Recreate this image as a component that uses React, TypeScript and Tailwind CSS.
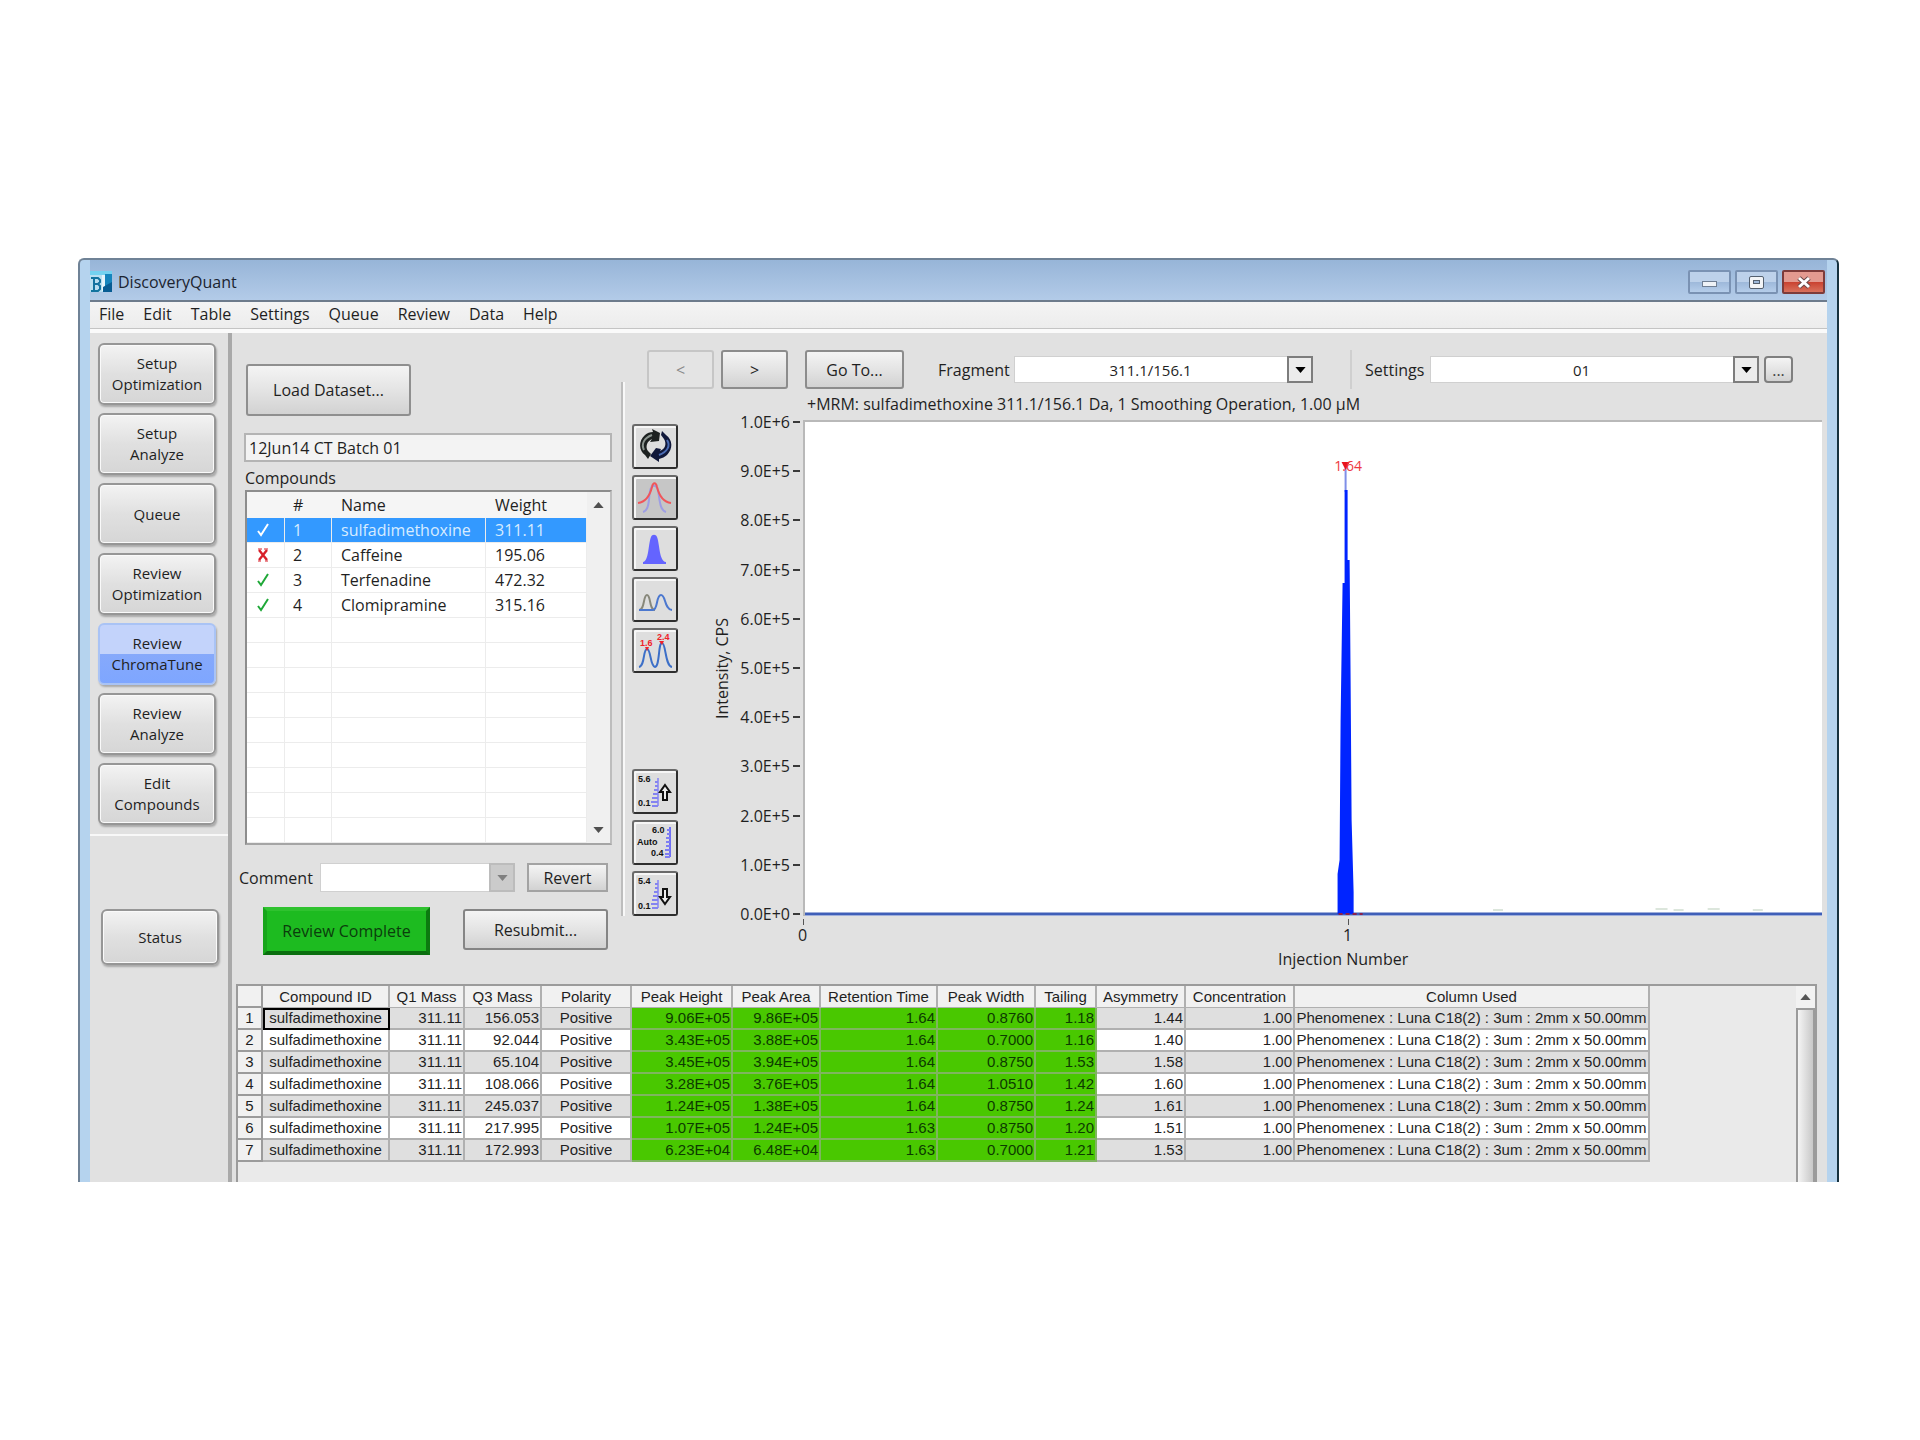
import type { ReactNode } from "react";

const MENUS = ["File", "Edit", "Table", "Settings", "Queue", "Review", "Data", "Help"];

const STEPS = [
  "Setup Optimization",
  "Setup Analyze",
  "Queue",
  "Review Optimization",
  "Review ChromaTune",
  "Review Analyze",
  "Edit Compounds",
];
const ACTIVE_STEP = "Review ChromaTune";

type Compound = { id: number; name: string; weight: string; ok: boolean };

const COMPOUNDS: Compound[] = [
  { id: 1, name: "sulfadimethoxine", weight: "311.11", ok: true },
  { id: 2, name: "Caffeine", weight: "195.06", ok: false },
  { id: 3, name: "Terfenadine", weight: "472.32", ok: true },
  { id: 4, name: "Clomipramine", weight: "315.16", ok: true },
];
const EMPTY_ROWS = [5, 6, 7, 8, 9, 10, 11, 12, 13];

const Y_TICKS = [
  "1.0E+6", "9.0E+5", "8.0E+5", "7.0E+5", "6.0E+5", "5.0E+5",
  "4.0E+5", "3.0E+5", "2.0E+5", "1.0E+5", "0.0E+0",
];

const COLUMNS = [
  { label: "Compound ID", width: "w-[127px]", align: "text-center", green: false },
  { label: "Q1 Mass", width: "w-[75px]", align: "text-right", green: false },
  { label: "Q3 Mass", width: "w-[77px]", align: "text-right", green: false },
  { label: "Polarity", width: "w-[90px]", align: "text-center", green: false },
  { label: "Peak Height", width: "w-[101px]", align: "text-right", green: true },
  { label: "Peak Area", width: "w-[88px]", align: "text-right", green: true },
  { label: "Retention Time", width: "w-[117px]", align: "text-right", green: true },
  { label: "Peak Width", width: "w-[98px]", align: "text-right", green: true },
  { label: "Tailing", width: "w-[61px]", align: "text-right", green: true },
  { label: "Asymmetry", width: "w-[89px]", align: "text-right", green: false },
  { label: "Concentration", width: "w-[109px]", align: "text-right", green: false },
  { label: "Column Used", width: "w-[355px]", align: "text-center", green: false },
];

const LUNA = "Phenomenex : Luna C18(2) : 3um : 2mm x 50.00mm";

const RESULTS = [
  ["156.053", "9.06E+05", "9.86E+05", "1.64", "0.8760", "1.18", "1.44"],
  ["92.044", "3.43E+05", "3.88E+05", "1.64", "0.7000", "1.16", "1.40"],
  ["65.104", "3.45E+05", "3.94E+05", "1.64", "0.8750", "1.53", "1.58"],
  ["108.066", "3.28E+05", "3.76E+05", "1.64", "1.0510", "1.42", "1.60"],
  ["245.037", "1.24E+05", "1.38E+05", "1.64", "0.8750", "1.24", "1.61"],
  ["217.995", "1.07E+05", "1.24E+05", "1.63", "0.8750", "1.20", "1.51"],
  ["172.993", "6.23E+04", "6.48E+04", "1.63", "0.7000", "1.21", "1.53"],
].map(([q3, ...rest]) => ["sulfadimethoxine", "311.11", q3, "Positive", ...rest, "1.00", LUNA]);

const grayFace = "bg-linear-to-b from-[#f4f4f4] via-[#e4e4e4] to-[#d2d2d2]";

function SideButton({ label, active, short }: { label: string; active?: boolean; short?: boolean }) {
  return (
    <button
      type="button"
      className={`flex w-[118px] items-center justify-center rounded-md border-2 px-3 text-center text-[15px] leading-[21px] shadow-[1px_2px_2px_rgba(0,0,0,0.25)] ${
        short ? "h-[56px]" : "h-[62px]"
      } ${
        active
          ? "border-[#a9c3f5] bg-linear-to-b from-[#c3d3fb] from-50% via-[#86a9fb] via-50% to-[#7ea6ff]"
          : "border-[#969696] bg-linear-to-b from-[#f3f3f3] from-0% via-[#e0e0e0] via-50% to-[#d6d6d6] inset-shadow-[0_0_0_1px_#fafafa]"
      }`}
    >
      <span className="w-min">{label}</span>
    </button>
  );
}

function Arrow({ up, className = "" }: { up?: boolean; className?: string }) {
  return (
    <svg viewBox="0 0 12 7" className={`h-[6px] w-[11px] ${className}`} aria-hidden>
      <path d={up ? "M0 7 6 0l6 7z" : "M0 0h12L6 7z"} fill="currentColor" />
    </svg>
  );
}

function Combo({ id, value, dim, className }: { id: string; value: string; dim?: boolean; className: string }) {
  return (
    <div className={`relative ${className}`}>
      <select
        id={id}
        defaultValue={value}
        className="block h-full w-full appearance-none border border-[#d0d0d0] bg-white pr-[26px] text-center text-[15px] outline-none [text-align-last:center]"
      >
        <option value={value}>{value}</option>
      </select>
      <span
        className={`pointer-events-none absolute inset-y-0 right-0 flex w-[26px] items-center justify-center border-2 ${
          dim ? "border-[#bcbcbc] bg-[#cbcbcb] text-[#808080]" : "border-[#7d7d7d] bg-[#ececec] text-black"
        }`}
      >
        <Arrow />
      </span>
    </div>
  );
}

function ToolButton({ label, pressed, children }: { label: string; pressed?: boolean; children: ReactNode }) {
  return (
    <button
      type="button"
      aria-label={label}
      className={`block h-[45px] w-[46px] rounded-[3px] border-2 border-t-[#6a6a6a] border-r-[#2e2e2e] border-b-[#2e2e2e] border-l-[#6a6a6a] ${
        pressed ? "bg-[#c6c6c6]" : "bg-[#dedede]"
      } inset-shadow-[2px_2px_0_#f6f6f6]`}
    >
      <svg viewBox="0 0 42 41" className="h-full w-full" fill="none" aria-hidden>
        {children}
      </svg>
    </button>
  );
}

function IconText({ x, y, fill = "#111", children }: { x: number; y: number; fill?: string; children: string }) {
  return (
    <text x={x} y={y} fill={fill} fontSize="9" fontWeight="700" fontFamily="Liberation Sans, sans-serif">
      {children}
    </text>
  );
}

function TitleBar() {
  return (
    <header className="flex h-[42px] items-center border-b-2 border-[#6d7b8c] bg-linear-to-b from-[#97b5d8] to-[#b3cbe8] pt-[4px] pr-[2px]">
      <svg viewBox="0 0 23 22" className="h-[22px] w-[23px]" aria-hidden>
        <path d="M0 4h13v17H0z" fill="#b9dff0" />
        <path d="M0 0h22v4H0z" fill="#74d2f0" />
        <path d="M12 4h3v16h-3z" fill="#e4f4fb" />
        <path d="M15 3h7v13h-7z" fill="#1585bd" />
        <path d="M13 16l9-5v10h-9z" fill="#075c93" />
        <path d="M1 7h7l2 2v2l-2 2 2 2v3l-2 2H1M4 7v13M4 13h4" fill="none" stroke="#12739f" strokeWidth="2" />
      </svg>
      <h1 className="ml-[5px] flex-1 text-base leading-[22px] text-[#1c2430]">DiscoveryQuant</h1>
      <div className="flex gap-[4px]">
        <button type="button" aria-label="Minimize" className="flex h-[24px] w-[43px] items-center justify-center rounded-[2px] border-2 border-[#7a92b3] bg-linear-to-b from-[#bdd1ea] from-50% via-[#9db8da] via-50% to-[#b5cdea]">
          <span className="mt-1 h-[6px] w-[15px] border border-[#6f7e93] bg-[#eef2f7]" />
        </button>
        <button type="button" aria-label="Restore" className="flex h-[24px] w-[43px] items-center justify-center rounded-[2px] border-2 border-[#7a92b3] bg-linear-to-b from-[#bdd1ea] from-50% via-[#9db8da] via-50% to-[#b5cdea]">
          <span className="flex h-[13px] w-[15px] items-center justify-center rounded-[2px] border border-[#54606f] bg-[#f2f4f7]">
            <span className="h-[4px] w-[7px] border border-[#54606f] bg-[#9db8da]" />
          </span>
        </button>
        <button type="button" aria-label="Close" className="flex h-[24px] w-[43px] items-center justify-center rounded-[2px] border-2 border-[#7d3b3a] bg-linear-to-b from-[#e39a90] from-50% via-[#c9402f] via-50% to-[#d9705c]">
          <svg viewBox="0 0 16 13" className="h-[13px] w-[16px]" aria-hidden>
            <path d="M3 2l10 9M13 2L3 11" stroke="#6b4a4a" strokeWidth="5" />
            <path d="M3 2l10 9M13 2L3 11" stroke="#fff" strokeWidth="3" />
          </svg>
        </button>
      </div>
    </header>
  );
}

function MenuBar() {
  return (
    <nav className="flex h-[31px] items-center gap-[19px] border-b-4 border-[#fafafa] bg-linear-to-b from-[#f4f4f4] to-[#ececec] pb-[3px] pl-[9px] text-base leading-[22px] inset-shadow-[0_-1px_0_#c4c4c4]">
      {MENUS.map((menu) => (
        <button key={menu} type="button">
          {menu}
        </button>
      ))}
    </nav>
  );
}

function Sidebar() {
  return (
    <aside className="w-[142px] shrink-0 border-r-4 border-[#a9a9a9]">
      <div className="flex flex-col gap-2 border-b-2 border-[#f8f8f8] pt-[10px] pb-[9px] pl-[8px]">
        {STEPS.map((step) => (
          <SideButton key={step} label={step} active={step === ACTIVE_STEP} />
        ))}
      </div>
      <div className="pt-[73px] pl-[11px]">
        <SideButton label="Status" short />
      </div>
    </aside>
  );
}

function Mark({ ok, selected }: { ok: boolean; selected: boolean }) {
  if (!ok) {
    return (
      <svg viewBox="0 0 12 14" className="ml-[10px] h-[14px] w-[12px]" aria-label="Rejected">
        <path d="M2 2l8 10M10 2L2 12" stroke="#d8202a" strokeWidth="2.4" />
        <path d="M1 1h4M7 1h4M1 13h3M8 13h3" stroke="#d8202a" strokeWidth="1" />
      </svg>
    );
  }
  return (
    <svg viewBox="0 0 12 14" className="ml-[10px] h-[14px] w-[12px]" aria-label="Accepted">
      <path d="M1 8l3 4L11 1" fill="none" stroke={selected ? "#fff" : "#1fa838"} strokeWidth="2" />
    </svg>
  );
}

function CompoundList() {
  const cell = "border-b border-r border-[#ececec] p-0";
  return (
    <div className="flex border-2 border-[#8d8d8d] border-r-[#bdbdbd] border-b-[#a5a5a5] bg-white">
      <table className="flex-1 table-fixed border-separate border-spacing-0 text-left text-base leading-[22px]">
        <thead>
          <tr className="h-[26px] bg-[#f5f5f5]">
            <th className="w-[38px] p-0" aria-label="Review state" />
            <th className="w-[47px] p-0 pl-2 font-normal">#</th>
            <th className="w-[154px] p-0 pl-[9px] font-normal">Name</th>
            <th className="p-0 pl-[9px] font-normal">Weight</th>
          </tr>
        </thead>
        <tbody>
          {COMPOUNDS.map((row) => (
            <tr key={row.id} className={`h-[25px] ${row.id === 1 ? "bg-[#3399ff] text-[#d7ecff]" : ""}`}>
              <td className={cell}>
                <Mark ok={row.ok} selected={row.id === 1} />
              </td>
              <td className={`${cell} pl-2`}>{row.id}</td>
              <td className={`${cell} pl-[9px]`}>{row.name}</td>
              <td className={`${cell} pl-[9px]`}>{row.weight}</td>
            </tr>
          ))}
          {EMPTY_ROWS.map((n) => (
            <tr key={n} className="h-[25px]">
              <td className={cell} />
              <td className={cell} />
              <td className={cell} />
              <td className={cell} />
            </tr>
          ))}
        </tbody>
      </table>
      <div className="flex w-[23px] shrink-0 flex-col items-center justify-between bg-[#f0f0f0] py-[10px] text-[#505050]">
        <Arrow up />
        <Arrow />
      </div>
    </div>
  );
}

function DatasetPanel() {
  return (
    <section className="flex w-[391px] shrink-0 flex-col pt-[31px] pl-[11px] text-base leading-[22px]">
      <button type="button" className={`ml-[3px] h-[52px] w-[165px] rounded-[3px] border-2 border-[#8f8f8f] ${grayFace}`}>
        Load Dataset...
      </button>
      <input
        aria-label="Dataset"
        readOnly
        value="12Jun14 CT Batch 01"
        className="mt-[17px] ml-[1px] h-[29px] w-[368px] border-2 border-[#b4b4b4] bg-[#f3f3f3] px-[3px]"
      />
      <h2 className="ml-[2px] pt-[5px]">Compounds</h2>
      <div className="mt-[1px] ml-[2px] w-[367px]">
        <CompoundList />
      </div>
      <div className="mt-[18px] flex h-[29px] items-center">
        <label htmlFor="comment" className="-ml-1 w-[81px]">
          Comment
        </label>
        <Combo id="comment" value="" dim className="h-[29px] w-[195px]" />
        <button type="button" className={`ml-3 h-[29px] w-[81px] border-2 border-[#a3a3a3] ${grayFace}`}>
          Revert
        </button>
      </div>
      <div className="mt-[15px] flex items-start pl-[20px]">
        <button
          type="button"
          className="h-[48px] w-[167px] border-4 border-t-[#2fc22f] border-r-[#0c7a10] border-b-[#0a6e0e] border-l-[#17a51b] bg-[#1dbb20] text-[#0b3d0c]"
        >
          Review Complete
        </button>
        <button type="button" className={`mt-[2px] ml-[33px] h-[41px] w-[145px] rounded-[3px] border-2 border-[#858585] ${grayFace}`}>
          Resubmit...
        </button>
      </div>
    </section>
  );
}

function PlotTools() {
  return (
    <div className="flex w-[56px] shrink-0 flex-col gap-[6px] border-l-2 border-[#f8f8f8] pt-[42px] pl-[7px] shadow-[-2px_0_0_#bdbdbd]">
      <ToolButton label="Refresh">
        <path d="M14 33 11 29C5 25 4 15 11 9c2-2 5-3 8-3l-1-3 8 4-1 8-9 1 2-3c-5 2-7 8-4 12l3 3z" fill="#1d2120" />
        <path d="M10 24c-3-6 0-12 8-15" stroke="#8b948f" strokeWidth="2" />
        <path d="M28 5l4 4c7 5 7 14 1 20-2 2-5 3-8 4v3l-9-6 6-8 5 1-1 2c5-2 7-7 4-12l-3-4z" fill="#10183a" />
        <path d="M33 14c4 6 0 12-8 15" stroke="#4a6cb4" strokeWidth="2" />
      </ToolButton>
      <ToolButton label="Smooth" pressed>
        <path d="M9 35c8-2 5-20 8-24 1-3 5-3 6 0 3 4 1 22 9 24" stroke="#9d9de4" strokeWidth="2" />
        <path d="M4 26c8-1 12-8 14-16 1-5 4-5 5 0 2 8 6 15 14 16" stroke="#f0565a" strokeWidth="2" />
      </ToolButton>
      <ToolButton label="Show peak area">
        <path d="M9 36v-2c6-1 5-17 8-25 1-3 5-3 6 0 3 8 2 24 9 25v2z" fill="#6464ff" />
      </ToolButton>
      <ToolButton label="Overlay traces">
        <path d="M5 31c6 0 4-15 8-15s2 15 8 15" stroke="#87877a" strokeWidth="2" />
        <path d="M5 31h14c5 0 3-15 8-15s3 14 11 15" stroke="#4c78cf" strokeWidth="2" />
      </ToolButton>
      <ToolButton label="Label peaks">
        <path d="M5 37c6-1 4-18 8-18s3 17 8 18c5-1 3-24 7-24s3 23 10 24" stroke="#3c6fc8" strokeWidth="2" />
        <path d="M11 17h4l-2 4zM25 11h5l-2 4z" fill="#f0222a" />
        <IconText x={6} y={16} fill="#f0222a">1.6</IconText>
        <IconText x={23} y={10} fill="#f0222a">2.4</IconText>
      </ToolButton>
      <div className="mt-[90px] flex flex-col gap-[6px]">
        <ToolButton label="Scale up">
          <IconText x={4} y={11}>5.6</IconText>
          <IconText x={4} y={35}>0.1</IconText>
          <path d="M24 7v28" stroke="#9a9af0" strokeWidth="2" />
          <path d="M21 11h3M21 15h3M20 19h4M19 23h5M18 27h6M17 31h7M18 35h6" stroke="#8484f0" strokeWidth="2" />
          <path d="M31 14l5 7h-3v8h-4v-8h-3z" stroke="#111" strokeWidth="2" fill="#eee" />
        </ToolButton>
        <ToolButton label="Set scale">
          <IconText x={18} y={11}>6.0</IconText>
          <IconText x={3} y={23}>Auto</IconText>
          <IconText x={17} y={34}>0.4</IconText>
          <path d="M36 5v30" stroke="#6f6ff4" strokeWidth="2" />
          <path d="M33 8h3M33 12h3M32 16h4M32 20h4M32 24h4M31 28h5M31 32h5M31 35h5" stroke="#7f7ff4" strokeWidth="2" />
        </ToolButton>
        <ToolButton label="Scale down">
          <IconText x={4} y={11}>5.4</IconText>
          <IconText x={4} y={36}>0.1</IconText>
          <path d="M24 7v28" stroke="#9a9af0" strokeWidth="2" />
          <path d="M21 11h3M21 15h3M20 19h4M19 23h5M18 27h6M17 31h7M18 35h6" stroke="#8484f0" strokeWidth="2" />
          <path d="M31 31l5-7h-3v-8h-4v8h-3z" stroke="#111" strokeWidth="2" fill="#eee" />
        </ToolButton>
      </div>
    </div>
  );
}

function PlotToolbar() {
  return (
    <div className="flex h-[39px] items-center pr-[34px] pl-[26px] text-base leading-[22px]">
      <button type="button" disabled className="h-[39px] w-[67px] rounded-[3px] border-2 border-[#c6c6c6] bg-[#e4e4e4] text-[#8a8a8a]">
        &lt;
      </button>
      <button type="button" className={`ml-[7px] h-[39px] w-[67px] rounded-[3px] border-2 border-[#8c8c8c] ${grayFace}`}>
        &gt;
      </button>
      <button type="button" className={`ml-[17px] h-[39px] w-[99px] rounded-[3px] border-2 border-[#8c8c8c] ${grayFace}`}>
        Go To...
      </button>
      <label htmlFor="fragment" className="ml-[34px] w-[76px]">
        Fragment
      </label>
      <Combo id="fragment" value="311.1/156.1" className="h-[27px] w-[299px]" />
      <span className="ml-[37px] h-full w-[2px] bg-[#cfcfcf]" />
      <label htmlFor="settings" className="ml-[13px] w-[65px]">
        Settings
      </label>
      <Combo id="settings" value="01" className="h-[27px] flex-1" />
      <button type="button" aria-label="Edit settings" className={`ml-[5px] h-[27px] w-[29px] rounded-[4px] border-2 border-[#7f7f7f] leading-[20px] text-[#444] ${grayFace}`}>
        ...
      </button>
    </div>
  );
}

function Chromatogram() {
  return (
    <div className="flex pr-[5px] text-base leading-[22px]">
      <div className="mt-[206px] h-[104px] w-[22px] rotate-180 self-start text-center whitespace-nowrap [writing-mode:vertical-rl]">
        Intensity, CPS
      </div>
      <div className="flex h-[514px] w-[70px] flex-col justify-between text-right">
        {Y_TICKS.map((tick) => (
          <div key={tick} className="flex items-center justify-end gap-[3px] pr-[3px]">
            <span>{tick}</span>
            <span className="h-[2px] w-[7px] bg-[#3a3a3a]" />
          </div>
        ))}
      </div>
      <div className="flex-1 pt-[9px]">
        <div className="relative h-[496px] border-t-2 border-l-2 border-[#b9b9b9] bg-white">
          <svg viewBox="0 0 1014 494" preserveAspectRatio="none" className="block h-full w-full" aria-label="Chromatogram">
            <path d="M686 488h10M848 487h12M866 488h10M900 487h12M945 488h10" stroke="#b9cdb9" strokeWidth="1" />
            <path d="M0 492h1014" stroke="#3f5fb8" strokeWidth="3" />
            <path d="M539 46v24" stroke="#7f8fe8" strokeWidth="2" />
            <path d="M531 492v-40l2-14 1-138 2-139h2V68h3v70h2l1 120 1 140 2 72v22z" fill="#0024ff" />
            <path d="M532 492h24" stroke="#8c1f4a" strokeWidth="2" strokeDasharray="4 3" />
            <path d="M535 40h8l-4 8z" fill="#e8141c" />
          </svg>
          <span className="absolute top-[34px] left-[53.4%] -translate-x-1/2 text-sm leading-[20px] text-[#ee3a40]">1.64</span>
        </div>
        <div className="relative h-[60px]">
          <span className="absolute top-[3px] left-0 h-[6px] w-[1px] bg-[#555]" />
          <span className="absolute top-[3px] left-[53.5%] h-[6px] w-[1px] bg-[#555]" />
          <span className="absolute top-[8px] -left-[5px]">0</span>
          <span className="absolute top-[8px] left-[53%]">1</span>
          <span className="absolute top-[32px] left-[53%] -translate-x-1/2">Injection Number</span>
        </div>
      </div>
    </div>
  );
}

function ResultsTable() {
  return (
    <div className="mr-[10px] ml-[4px] flex h-[198px] border-t-2 border-l-2 border-[#9b9b9b] bg-[#eaeaea]">
      <div className="min-w-0 flex-1 overflow-hidden">
        <table className="table-fixed border-separate border-spacing-0 font-['Liberation_Sans',sans-serif] text-[15px] leading-[20px]">
          <thead>
            <tr className="h-[22px] bg-[#f1f1f1]">
              <th className="w-[25px] border-r-2 border-b-2 border-[#9b9b9b] p-0" aria-label="Row" />
              {COLUMNS.map((col) => (
                <th key={col.label} className={`${col.width} border-r-2 border-b border-[#b0b0b0] p-0 text-center font-normal whitespace-nowrap`}>
                  {col.label}
                </th>
              ))}
            </tr>
          </thead>
          <tbody>
            {RESULTS.map((row, i) => (
              <tr key={row[2]} className={`h-[22px] ${i % 2 === 0 ? "bg-[#dfdfdf]" : "bg-white"}`}>
                <th className="border-r-2 border-b-2 border-[#9b9b9b] bg-[#f1f1f1] p-0 text-center font-normal">{i + 1}</th>
                {row.map((value, j) => (
                  <td
                    key={COLUMNS[j].label}
                    className={`border-r-2 border-b-2 px-[1px] py-0 whitespace-nowrap ${COLUMNS[j].align} ${
                      COLUMNS[j].green ? "border-[#7fb55f] bg-[#49c800] text-[#0c3a00]" : "border-[#b0b0b0]"
                    } ${i === 0 && j === 0 ? "outline-2 -outline-offset-2 outline-black" : ""}`}
                  >
                    {value}
                  </td>
                ))}
              </tr>
            ))}
          </tbody>
        </table>
      </div>
      <div className="flex w-[21px] shrink-0 flex-col items-center border-r-2 border-[#9b9b9b] bg-[#f2f2f2] pt-[8px] text-[#555]">
        <Arrow up />
        <div className="mt-[8px] w-full flex-1 border-2 border-b-0 border-[#9b9b9b] bg-linear-to-r from-[#f5f5f5] to-[#c8c8c8]" />
      </div>
    </div>
  );
}

export default function App() {
  return (
    <div className="min-h-screen bg-white pt-[258px] pr-[81px] pl-[78px] font-['Open_Sans','Noto_Sans',sans-serif] text-[#1f1f1f]">
      <main className="overflow-hidden rounded-t-[6px] border-t-2 border-r-2 border-l-2 border-[#6f8296] border-r-[#16323f] bg-[#b5d3ee] px-[10px]">
        <TitleBar />
        <MenuBar />
        <div className="flex bg-[#e1e1e1]">
          <Sidebar />
          <div className="min-w-0 flex-1">
            <div className="flex h-[651px]">
              <DatasetPanel />
              <div className="mt-[49px] h-[545px]">
                <PlotTools />
              </div>
              <div className="-ml-[58px] flex min-w-0 flex-1 flex-col pt-[17px]">
                <PlotToolbar />
                <p className="mt-[4px] ml-[186px] text-base leading-[22px]">
                  +MRM: sulfadimethoxine 311.1/156.1 Da, 1 Smoothing Operation, 1.00 µM
                </p>
                <div className="-mt-[4px] ml-[90px]">
                  <Chromatogram />
                </div>
              </div>
            </div>
            <ResultsTable />
          </div>
        </div>
      </main>
    </div>
  );
}
